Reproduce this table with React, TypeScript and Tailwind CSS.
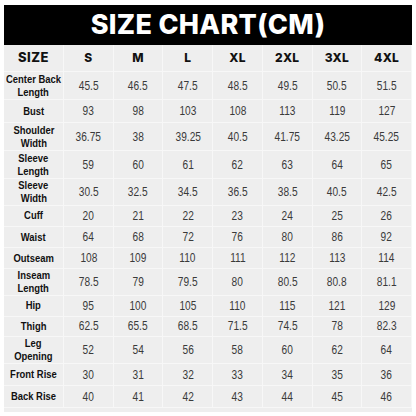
import React from "react";

const sizes = ["S", "M", "L", "XL", "2XL", "3XL", "4XL"];

const rows: { label: string[]; h: string; v: string[] }[] = [
  { label: ["Center Back", "Length"], h: "h-[28px]", v: ["45.5", "46.5", "47.5", "48.5", "49.5", "50.5", "51.5"] },
  { label: ["Bust"], h: "h-[23px]", v: ["93", "98", "103", "108", "113", "119", "127"] },
  { label: ["Shoulder", "Width"], h: "h-[28px]", v: ["36.75", "38", "39.25", "40.5", "41.75", "43.25", "45.25"] },
  { label: ["Sleeve", "Length"], h: "h-[28px]", v: ["59", "60", "61", "62", "63", "64", "65"] },
  { label: ["Sleeve", "Width"], h: "h-[26px]", v: ["30.5", "32.5", "34.5", "36.5", "38.5", "40.5", "42.5"] },
  { label: ["Cuff"], h: "h-[22px]", v: ["20", "21", "22", "23", "24", "25", "26"] },
  { label: ["Waist"], h: "h-[21px]", v: ["64", "68", "72", "76", "80", "86", "92"] },
  { label: ["Outseam"], h: "h-[21px]", v: ["108", "109", "110", "111", "112", "113", "114"] },
  { label: ["Inseam", "Length"], h: "h-[27px]", v: ["78.5", "79", "79.5", "80", "80.5", "80.8", "81.1"] },
  { label: ["Hip"], h: "h-[20px]", v: ["95", "100", "105", "110", "115", "121", "129"] },
  { label: ["Thigh"], h: "h-[21px]", v: ["62.5", "65.5", "68.5", "71.5", "74.5", "78", "82.3"] },
  { label: ["Leg", "Opening"], h: "h-[27px]", v: ["52", "54", "56", "58", "60", "62", "64"] },
  { label: ["Front Rise"], h: "h-[22px]", v: ["30", "31", "32", "33", "34", "35", "36"] },
  { label: ["Back Rise"], h: "h-[22px]", v: ["40", "41", "42", "43", "44", "45", "46"] },
];

const cell = "flex items-center justify-center border-r border-b border-[#f7f7f7]";

export default function App() {
  return (
    <div className="w-[416px] h-[416px] bg-white pt-[5px] pl-[4px]">
      <div className="w-[408px]">
        <div className="h-[40px] bg-black flex items-center justify-center text-white text-[27px] font-extrabold tracking-[0.3px] font-['Inter','Liberation_Sans',sans-serif]">
          SIZE CHART(CM)
        </div>
        <div className="bg-[#eeeeee] pb-[4px]">
          <div className="grid grid-cols-[60px_repeat(7,1fr)] h-[27px] font-['Inter','Liberation_Sans',sans-serif] font-extrabold text-[#111]">
            <div className={`${cell} text-[13px] tracking-[0.5px]`}>SIZE</div>
            {sizes.map((s) => (
              <div key={s} className={`${cell} text-[12px] tracking-[0.3px]`}>
                {s}
              </div>
            ))}
          </div>
          {rows.map((r) => (
            <div
              key={r.label.join(" ")}
              className={`grid grid-cols-[60px_repeat(7,1fr)] ${r.h} font-['Liberation_Sans',sans-serif]`}
            >
              <div className={`${cell} flex-col text-[11.5px] font-bold text-[#111] leading-[13px]`}>
                {r.label.map((l) => (
                  <span key={l} className="whitespace-nowrap scale-x-[0.82]">
                    {l}
                  </span>
                ))}
              </div>
              {r.v.map((v, i) => (
                <div key={i} className={`${cell} text-[13px] text-[#3a3a3a]`}>
                  <span className="whitespace-nowrap scale-x-[0.78]">{v}</span>
                </div>
              ))}
            </div>
          ))}
        </div>
      </div>
    </div>
  );
}
